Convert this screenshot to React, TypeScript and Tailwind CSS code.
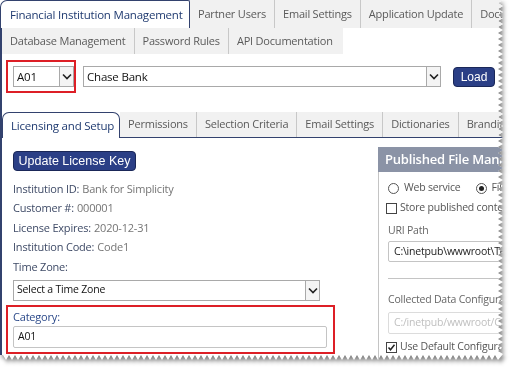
import React from "react";

const W = 503;
const H = 360;
const A = 5;
const P = 3;

// torn right / bottom edge of the clipped screenshot
const tornEdge = () => {
  const pts: string[] = ["0px 0px"];
  let k = 0;
  for (let y = 0; y < H - A; y += P, k++) pts.push(`${W - (k % 2 ? A : 0)}px ${y}px`);
  k = 0;
  for (let x = W - A; x > 0; x -= P, k++) pts.push(`${x}px ${H - (k % 2 ? A : 0)}px`);
  pts.push(`0px ${H - A}px`);
  return `polygon(${pts.join(", ")})`;
};

const Chevron = () => (
  <svg width="10" height="7" viewBox="0 0 10 7">
    <path d="M1 1.5 L5 5.5 L9 1.5" fill="none" stroke="#222" strokeWidth="1.6" />
  </svg>
);

const Select = ({ value, className }: { value: string; className: string }) => (
  <div className={`flex items-stretch border border-[#a9a9a9] bg-white ${className}`}>
    <div className="flex-1 flex items-center pl-[3px] text-[#111] truncate">{value}</div>
    <div className="w-[14px] border-l border-[#a9a9a9] bg-[#f4f4f4] flex items-center justify-center">
      <Chevron />
    </div>
  </div>
);

const Radio = ({ checked }: { checked?: boolean }) => (
  <span className="w-[11px] h-[11px] rounded-full border border-[#555] bg-white flex items-center justify-center shrink-0">
    {checked && <span className="w-[5px] h-[5px] rounded-full bg-[#222]" />}
  </span>
);

const Check = ({ checked }: { checked?: boolean }) => (
  <span className="w-[11px] h-[11px] border border-[#444] bg-white flex items-center justify-center shrink-0">
    {checked && (
      <svg width="9" height="9" viewBox="0 0 9 9">
        <path d="M1.5 4.5 L3.5 6.8 L7.5 1.8" fill="none" stroke="#222" strokeWidth="1.5" />
      </svg>
    )}
  </span>
);

const Tab = ({ label, last }: { label: string; last?: boolean }) => (
  <div
    className={`h-full flex items-center px-[8px] shrink-0 whitespace-nowrap text-[#5a5a5a] ${
      last ? "" : "border-r border-[#c8c8c8]"
    }`}
  >
    {label}
  </div>
);

const Info = ({ label, value }: { label: string; value: string }) => (
  <div className="h-[19.5px] flex items-center">
    <span className="text-[#3e4a66]">{label}</span>
    <span className="text-[#757575] ml-[3px]">{value}</span>
  </div>
);

export default function App() {
  return (
    <div className="w-[512px] h-[369px] bg-white overflow-hidden">
      <div className="[filter:drop-shadow(2px_3px_2px_rgba(0,0,0,0.5))]">
        <div
          className="w-[503px] h-[360px] bg-white overflow-hidden flex flex-col text-[11px] tracking-[-0.2px] font-['Open_Sans',sans-serif]"
          style={{ clipPath: tornEdge() }}
        >
          {/* top tabs */}
          <div className="h-[28px] flex shrink-0 text-[11px]">
            <div className="w-[190px] h-full border border-b-0 border-[#33426e] rounded-tl-[7px] rounded-tr-[2px] bg-white flex items-center pl-[9px] text-[#1f3a70] text-[11.5px] shrink-0 whitespace-nowrap">
              Financial Institution Management
            </div>
            <div className="flex h-full bg-[#f1f1f1]">
              <Tab label="Partner Users" />
              <Tab label="Email Settings" />
              <Tab label="Application Update" />
              <Tab label="Documentation" last />
            </div>
          </div>

          <div className="flex-1 border-l-2 border-[#33426e] flex flex-col">
            <div className="h-[26px] w-[341px] flex bg-[#f1f1f1] shrink-0 text-[11px]">
              <Tab label="Database Management" />
              <Tab label="Password Rules" />
              <Tab label="API Documentation" last />
            </div>

            {/* institution picker */}
            <div className="flex items-center mt-[6px] ml-[4px] text-[11.5px]">
              <div className="border-2 border-[#dd1f26] w-[70px] h-[33px] pl-[5px] flex items-center">
                <Select value="A01" className="w-[61px] h-[21px]" />
              </div>
              <Select value="Chase Bank" className="w-[358px] h-[21px] ml-[7px]" />
              <button className="ml-[12px] w-[42px] h-[20px] rounded-[4px] bg-[#2b3f86] border border-[#1a2758] text-white text-[12px] tracking-normal font-['Liberation_Sans',sans-serif] leading-none">
                Load
              </button>
            </div>

            {/* inner tabs */}
            <div className="mt-[19px] h-[26px] flex border-b border-[#33426e] shrink-0 text-[11px]">
              <div className="w-[118px] h-[26px] border border-b-0 border-[#33426e] rounded-t-[7px] bg-white flex items-center pl-[8px] text-[#1f3a70] text-[11.5px] shrink-0 -mb-px whitespace-nowrap">
                Licensing and Setup
              </div>
              <div className="flex h-full bg-[#f1f1f1]">
                <Tab label="Permissions" />
                <Tab label="Selection Criteria" />
                <Tab label="Email Settings" />
                <Tab label="Dictionaries" />
                <Tab label="Branding" last />
              </div>
            </div>

            <div className="flex flex-1">
              {/* left column */}
              <div className="w-[376px] shrink-0 pl-[11px] pt-[13px] flex flex-col">
                <button className="w-[123px] h-[20px] rounded-[4px] bg-[#2b3f86] border border-[#1a2758] text-white text-[12.5px] tracking-normal font-['Liberation_Sans',sans-serif] leading-none">
                  Update License Key
                </button>
                <div className="mt-[8px]">
                  <Info label="Institution ID:" value="Bank for Simplicity" />
                  <Info label="Customer #:" value="000001" />
                  <Info label="License Expires:" value="2020-12-31" />
                  <Info label="Institution Code:" value="Code1" />
                  <div className="h-[19.5px] flex items-center text-[#3e4a66]">Time Zone:</div>
                </div>
                <Select value="Select a Time Zone" className="w-[307px] h-[21px] mt-[3px] text-[10.5px]" />
                <div className="mt-[4px] -ml-[7px] w-[329px] h-[49px] border-2 border-[#dd1f26] pl-[5px] pt-[2px]">
                  <div className="h-[17px] flex items-center text-[#2c4a8a]">Category:</div>
                  <div className="w-[314px] h-[22px] border border-[#c4c4c4] rounded-[2px] flex items-center pl-[4px] text-[10.5px] text-[#111]">
                    A01
                  </div>
                </div>
              </div>

              {/* right panel */}
              <div className="flex-1 mt-[9px] flex flex-col min-w-0">
                <div className="h-[25px] bg-[#8b93a6] text-white text-[13px] font-semibold flex items-center pl-[7px] whitespace-nowrap shrink-0">
                  Published File Management
                </div>
                <div className="flex-1 border-l border-[#c4c4c4] pl-[9px] text-[10.5px] text-[#555] whitespace-nowrap">
                  <div className="h-[20px] mt-[6px] flex items-center">
                    <Radio />
                    <span className="ml-[5px]">Web service</span>
                    <span className="ml-[15px]"><Radio checked /></span>
                    <span className="ml-[5px]">File system</span>
                  </div>
                  <div className="h-[20px] flex items-center -ml-[2px]">
                    <Check />
                    <span className="ml-[3px]">Store published content</span>
                  </div>
                  <div className="h-[18px] mt-[4px] flex items-center text-[#666]">URI Path</div>
                  <div className="h-[21px] mt-[1px] border border-[#c4c4c4] rounded-[2px] flex items-center pl-[5px] text-[#222]">
                    C:\inetpub\wwwroot\Temp
                  </div>
                  <div className="mt-[16px] border-t border-[#c4c4c4]" />
                  <div className="h-[18px] mt-[12px] flex items-center text-[#666]">Collected Data Configuration</div>
                  <div className="h-[22px] mt-[3px] border border-[#dcdcdc] rounded-[2px] flex items-center pl-[5px] text-[#c0c0c0]">
                    C:/inetpub/wwwroot/Custom
                  </div>
                  <div className="h-[18px] mt-[4px] flex items-center -ml-[2px]">
                    <Check checked />
                    <span className="ml-[3px]">Use Default Configuration</span>
                  </div>
                </div>
              </div>
            </div>
          </div>
        </div>
      </div>
    </div>
  );
}
